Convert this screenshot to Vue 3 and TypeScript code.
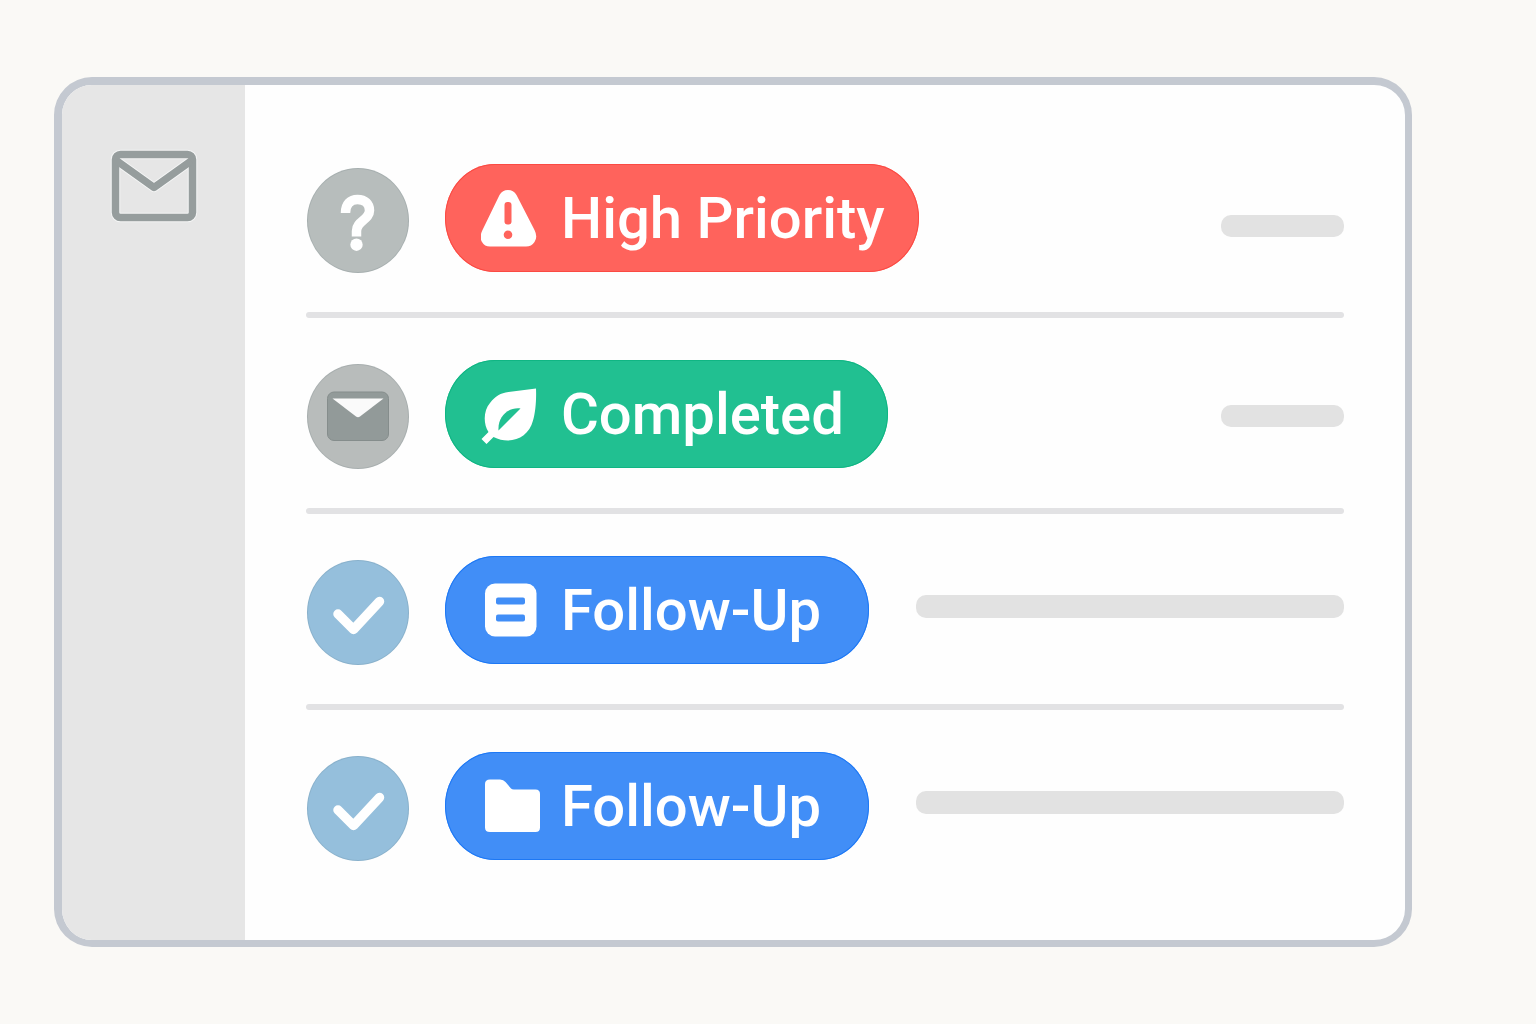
<script setup lang="ts">
type IconName = 'alert' | 'leaf' | 'note' | 'folder'
type AvatarName = 'question' | 'mail' | 'check'

interface Row {
  id: number
  avatar: AvatarName
  label: string
  tone: 'red' | 'green' | 'blue'
  icon: IconName
  bar: 'low' | 'mid' | 'long'
}

const rows: Row[] = [
  { id: 1, avatar: 'question', label: 'High Priority', tone: 'red', icon: 'alert', bar: 'low' },
  { id: 2, avatar: 'mail', label: 'Completed', tone: 'green', icon: 'leaf', bar: 'mid' },
  { id: 3, avatar: 'check', label: 'Follow-Up', tone: 'blue', icon: 'note', bar: 'long' },
  { id: 4, avatar: 'check', label: 'Follow-Up', tone: 'blue', icon: 'folder', bar: 'long' },
]
</script>

<template>
  <div class="page">
    <div class="card">
      <nav class="sidebar">
        <button class="mail-button" type="button" aria-label="Mail">
          <svg width="88" height="74" viewBox="0 0 88 74" fill="none" stroke-linejoin="round">
            <g stroke="#f4f5f5" stroke-width="9.500">
              <rect x="5.500" y="5.500" width="77" height="63" rx="5" />
              <path d="M7 12 L44 38.500 L81 12" />
            </g>
            <g stroke="#969d9d" stroke-width="7.500">
              <rect x="5.500" y="5.500" width="77" height="63" rx="5" />
              <path d="M7 12 L44 38.500 L81 12" />
            </g>
          </svg>
        </button>
      </nav>

      <main class="content">
        <ul class="list">
          <li v-for="row in rows" :key="row.id" class="item">
            <div class="row">
              <span class="avatar" :class="`avatar--${row.avatar}`">
                <svg width="102" height="105" viewBox="0 0 102 105" aria-hidden="true">
                  <template v-if="row.avatar === 'question'">
                    <path
                      d="M38.500 45 C38.500 36 43.500 31.500 50.500 31.500 C58 31.500 62.500 36 62.500 42.500 C62.500 52 49.500 53 49.500 63 V68.500"
                      fill="none" stroke="#fff" stroke-width="9.500"
                    />
                    <circle cx="49.500" cy="76.700" r="6.200" fill="#fff" />
                  </template>
                  <template v-else-if="row.avatar === 'mail'">
                    <rect x="20.500" y="28" width="61" height="48.500" rx="6.500" fill="#929a99" stroke="#858d8c" />
                    <path d="M25.500 34.500 H76.500 L53 52.500 Q51 54 49 52.500 Z" fill="#fafafa" />
                  </template>
                  <path
                    v-else
                    d="M31 54 L46.500 69.500 L72.500 41.500"
                    fill="none" stroke="#fff" stroke-width="9.500" stroke-linecap="round" stroke-linejoin="round"
                  />
                </svg>
              </span>

              <span class="pill" :class="`pill--${row.tone}`">
                <svg class="pill-icon" width="60" height="60" viewBox="0 0 60 60" aria-hidden="true">
                  <template v-if="row.icon === 'alert'">
                    <path
                      d="M18.500 7 Q21.500 2 27 2 Q32.500 2 35.500 7 L53.500 42 Q57 49 53.500 54 Q50.500 58.500 45 58.500 H9 Q3.500 58.500 1 54 Q-2 49 1.500 42 Z"
                      fill="#fff"
                    />
                    <rect x="23.500" y="14" width="7" height="22.500" rx="3" class="cut" />
                    <circle cx="27" cy="46.800" r="4.300" class="cut" />
                  </template>
                  <template v-else-if="row.icon === 'leaf'">
                    <path
                      d="M55 4.500 C55.500 15.500 54.500 28.500 52 36.500 C47.500 54 29.500 61.500 12.500 53 L5.500 60 L0.500 55 L7.500 48 C2 39.500 2.500 26.500 9 19 C14.500 12 19.500 9 27.500 8 Z"
                      fill="#fff"
                    />
                    <path d="M39.500 24.500 C27 23 16.500 32.500 17.500 46.500 Z" class="cut" />
                  </template>
                  <template v-else-if="row.icon === 'note'">
                    <rect x="4" y="3.500" width="51.500" height="53" rx="10" fill="#fff" />
                    <rect x="15" y="17.500" width="29" height="7" rx="2" class="cut" />
                    <rect x="15" y="34.500" width="29" height="7" rx="2" class="cut" />
                  </template>
                  <path
                    v-else
                    d="M9 3.500 H19 Q22.500 3.500 24.500 6 L30 12.500 Q31 13.500 33 13.500 H54.500 Q59 13.500 59 18 V51.500 Q59 56 54.500 56 H9 Q4 56 4 51.500 V8 Q4 3.500 9 3.500 Z"
                    fill="#fff"
                  />
                </svg>
                <span class="pill-text">{{ row.label }}</span>
              </span>

              <span class="bar" :class="`bar--${row.bar}`"></span>
            </div>
          </li>
        </ul>
      </main>
    </div>
  </div>
</template>

<style>
body {
  margin: 0;
  background: #faf9f6;
}
</style>

<style scoped>
.page {
  min-height: 100vh;
  box-sizing: border-box;
  padding: 77px 124px 77px 54px;
  font-family: Roboto, "Liberation Sans", sans-serif;
}

.card {
  display: flex;
  border: 7px solid #c4c9d1;
  border-width: 8px 7px 7px 8px;
  border-radius: 38px;
  overflow: hidden;
  background: #fefefe;
}

.sidebar {
  flex: 0 0 183px;
  display: flex;
  justify-content: center;
  align-items: flex-start;
  box-sizing: border-box;
  padding-top: 64px;
  background: #e6e6e6;
}

.mail-button {
  display: block;
  padding: 0;
  border: 0;
  background: none;
  cursor: pointer;
}

.mail-button svg,
.avatar svg {
  display: block;
}

.content {
  flex: 1;
  min-width: 0;
  padding: 79px 61px;
}

.list {
  margin: 0;
  padding: 0;
  list-style: none;
}

.item:not(:last-child)::after {
  content: "";
  display: block;
  height: 6px;
  margin: 39px 0 42px;
  border-radius: 3px;
  background: #e2e2e4;
}

.row {
  display: flex;
  align-items: flex-start;
}

.avatar {
  flex: none;
  margin: 4px 36px 0 1px;
  border-radius: 50%;
  box-shadow: inset 0 0 0 1px rgba(60, 80, 90, 0.12);
}

.avatar--question {
  background: #b7bdbc;
}

.avatar--mail {
  background: #b8bcbb;
}

.avatar--check {
  background: #95bfdc;
}

.pill {
  flex: none;
  display: flex;
  align-items: center;
  gap: 20px;
  box-sizing: border-box;
  height: 108px;
  padding-left: 36px;
  border-radius: 50px / 54px;
  color: #fff;
}

.pill--red {
  --tone: #ff635c;
  padding-right: 34px;
  background: var(--tone);
  box-shadow: inset 0 0 0 1px #fb4a43;
}

.pill--green {
  --tone: #21c091;
  padding-right: 44px;
  background: var(--tone);
  box-shadow: inset 0 0 0 1px #10b583;
}

.pill--blue {
  --tone: #418ef7;
  padding-right: 48px;
  background: var(--tone);
  box-shadow: inset 0 0 0 1px #1d78f5;
}

.pill-icon {
  flex: none;
}

.cut {
  fill: var(--tone);
}

.pill-text {
  font-size: 58px;
  font-weight: 500;
  line-height: 68px;
  white-space: nowrap;
}

.bar {
  height: 22px;
  margin-left: auto;
  border-radius: 10px;
  background: #e2e2e2;
}

.bar--low,
.bar--mid {
  width: 123px;
}

.bar--low {
  margin-top: 51px;
}

.bar--mid {
  margin-top: 45px;
}

.bar--long {
  width: 428px;
  height: 23px;
  margin-top: 39px;
}
</style>
